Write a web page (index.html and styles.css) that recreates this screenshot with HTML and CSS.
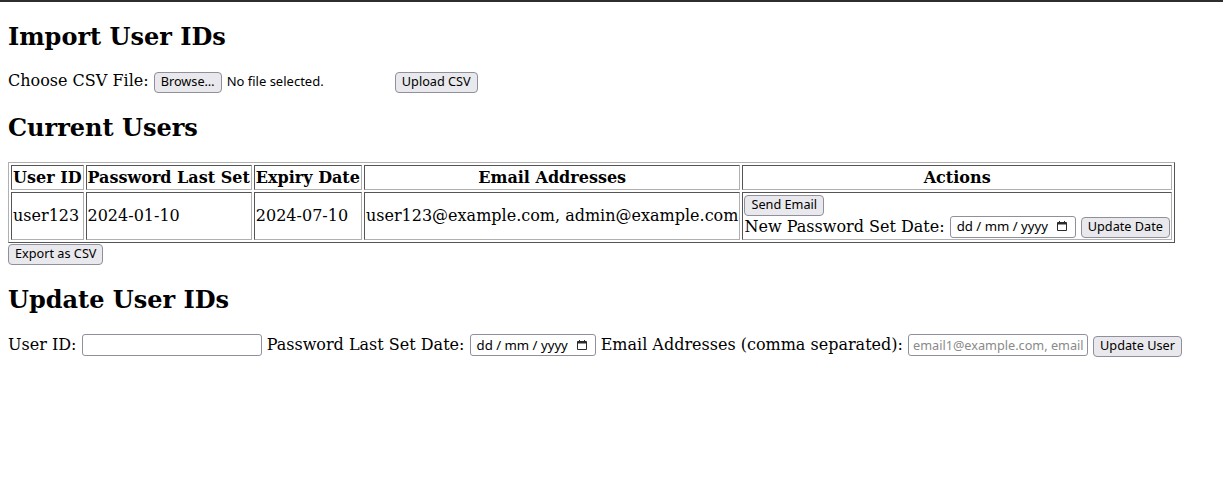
FILE: index.html
```html
<!DOCTYPE html>
<html class="page">
<head>
<meta charset="utf-8">
<title>User IDs</title>
<link rel="stylesheet" href="styles.css">
</head>
<body class="body">
<h2 class="title">Import User IDs</h2>
<form class="row">
  <label class="lbl">Choose CSV File:</label>
  <span class="file"><button type="button" class="btn">Browse…</button><span class="file-status">No file selected.</span></span>
  <button type="button" class="btn">Upload CSV</button>
</form>

<h2 class="title">Current Users</h2>
<table class="users">
  <thead>
    <tr>
      <th class="cell head">User ID</th>
      <th class="cell head">Password Last Set</th>
      <th class="cell head">Expiry Date</th>
      <th class="cell head">Email Addresses</th>
      <th class="cell head">Actions</th>
    </tr>
  </thead>
  <tbody>
    <tr>
      <td class="cell">user123</td>
      <td class="cell">2024-01-10</td>
      <td class="cell">2024-07-10</td>
      <td class="cell">user123@example.com, admin@example.com</td>
      <td class="cell">
        <button type="button" class="btn">Send Email</button><br>
        <label class="lbl">New Password Set Date:</label>
        <span class="date"><span class="date-text">dd / mm / yyyy</span><svg class="cal" width="12" height="12" viewBox="0 0 12 12"><path d="M1.5 2.5h9v8h-9z" fill="none" stroke="#2b2b2b" stroke-width="1"/><rect x="1.5" y="2.5" width="9" height="2" fill="#2b2b2b"/><path d="M3.5 1v2 M8.5 1v2" stroke="#2b2b2b" stroke-width="1"/></svg></span>
        <button type="button" class="btn">Update Date</button>
      </td>
    </tr>
  </tbody>
</table>
<button type="button" class="btn">Export as CSV</button>

<h2 class="title">Update User IDs</h2>
<form class="row">
  <label class="lbl">User ID:</label>
  <input type="text" class="field">
  <label class="lbl">Password Last Set Date:</label>
  <span class="date"><span class="date-text">dd / mm / yyyy</span><svg class="cal" width="12" height="12" viewBox="0 0 12 12"><path d="M1.5 2.5h9v8h-9z" fill="none" stroke="#2b2b2b" stroke-width="1"/><rect x="1.5" y="2.5" width="9" height="2" fill="#2b2b2b"/><path d="M3.5 1v2 M8.5 1v2" stroke="#2b2b2b" stroke-width="1"/></svg></span>
  <label class="lbl">Email Addresses (comma separated):</label>
  <input type="text" class="field" placeholder="email1@example.com, email2@example.com">
  <button type="button" class="btn">Update User</button>
</form>
</body>
</html>
```
FILE: styles.css
```css
.page {
  border-top: 2px solid #2e2e2e;
  background: #fff;
}
.body {
  margin: 0 8px 8px;
  font-family: "DejaVu Serif", serif;
  font-size: 16px;
  color: #000;
}
.title {
  font-size: 24px;
  font-weight: bold;
  margin: 19.92px 0;
}
.row {
  margin: 0;
}
.btn {
  font-family: "Noto Sans", sans-serif;
  font-size: 12.7px;
  line-height: 17px;
  color: #000;
  background: #e9e9ed;
  border: 1px solid #8f8f9d;
  border-radius: 4px;
  padding: 0 6px 2px;
  margin: 0;
  vertical-align: baseline;
}
.file {
  display: inline-block;
  width: 236px;
}
.file-status {
  font-family: "Noto Sans", sans-serif;
  font-size: 13px;
  margin-left: 5px;
}
.users {
  border-width: 1px;
  border-style: solid;
  border-color: #b0b0b0 #555 #555 #b0b0b0;
  border-spacing: 2px;
}
.cell {
  border-width: 1px;
  border-style: solid;
  border-color: #555 #b0b0b0 #b0b0b0 #555;
  padding: 1px;
  vertical-align: middle;
  text-align: left;
}
.head {
  text-align: center;
  font-weight: bold;
  line-height: 21px;
}
.date {
  display: inline-flex;
  align-items: center;
  box-sizing: border-box;
  width: 126px;
  height: 22px;
  padding: 0 7px 1px 6px;
  border: 1px solid #8f8f9d;
  border-radius: 3px;
  justify-content: space-between;
  vertical-align: baseline;
  background: #fff;
}
.date-text {
  font-family: "Noto Sans", sans-serif;
  font-size: 13.2px;
}
.cal {
  display: block;
}
.field {
  box-sizing: border-box;
  width: 180px;
  height: 22px;
  border: 1px solid #8f8f9d;
  border-radius: 3px;
  padding: 0 4px;
  margin: 0;
  font-family: "Noto Sans", sans-serif;
  font-size: 12.7px;
  vertical-align: baseline;
}
.field::placeholder {
  color: #8a8a8a;
}
```
